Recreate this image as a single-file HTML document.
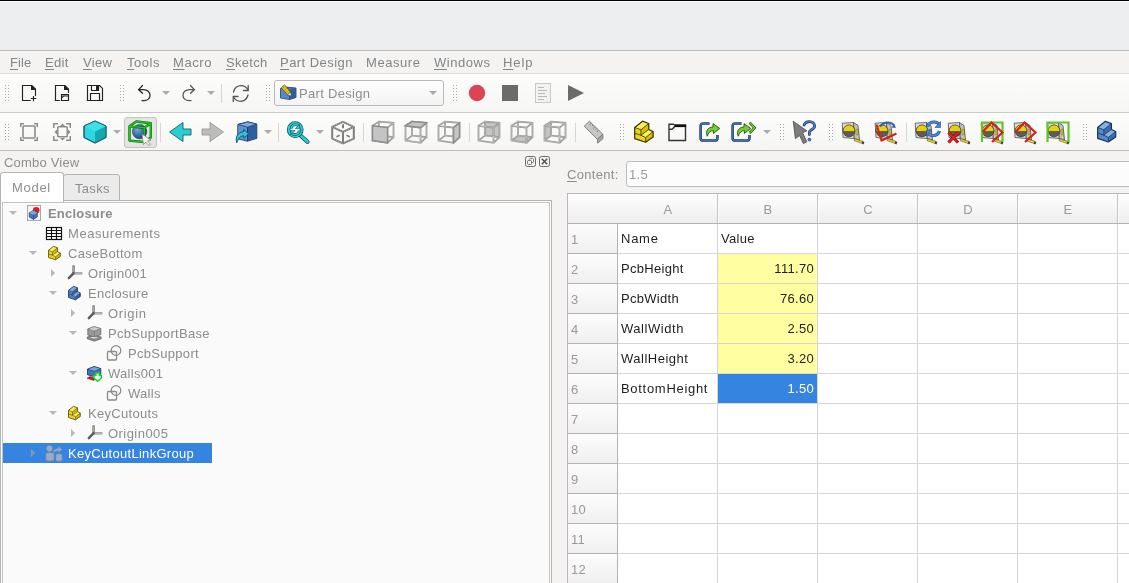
<!DOCTYPE html>
<html><head><meta charset="utf-8">
<style>
*{box-sizing:border-box;margin:0;padding:0}
html,body{width:1129px;height:583px;overflow:hidden;background:#f4f3f1;font-family:"Liberation Sans",sans-serif;font-size:13px;position:relative}
.a{position:absolute}
.t{position:absolute;white-space:pre;line-height:16px;margin-top:1px;will-change:transform}
.menu .t{margin-top:0}
.menu .t{color:#838586;top:55px;letter-spacing:0.3px}
u{text-decoration:underline;text-underline-offset:2px;text-decoration-thickness:1px}
.tree .t{color:#8c8c8c;letter-spacing:0.3px}
.grid .t{color:#1e1e1e;letter-spacing:0.3px}
.grid .hdr{color:#9a9a9a}
#ov{position:absolute;left:0;top:0}
</style></head><body>
<!-- title area -->
<div class="a" style="left:0;top:0;width:1129px;height:1px;background:#000"></div>
<div class="a" style="left:0;top:1px;width:1129px;height:1px;background:#fff"></div>
<div class="a" style="left:0;top:2px;width:1129px;height:48px;background:#edeef0"></div>
<div class="a" style="left:0;top:50px;width:1129px;height:1px;background:#bdbec0"></div>
<!-- menu -->
<div class="a" style="left:0;top:51px;width:1129px;height:22px;background:#f4f3f1"></div>
<div class="a" style="left:0;top:73px;width:1129px;height:1px;background:#dedddb"></div>
<!-- toolbar 1 -->
<div class="a" style="left:0;top:74px;width:1129px;height:38px;background:linear-gradient(#fdfdfc,#f5f5f3)"></div>
<div class="a" style="left:0;top:112px;width:1129px;height:1px;background:#c9c9c8"></div>
<!-- toolbar 2 -->
<div class="a" style="left:0;top:113px;width:1129px;height:37px;background:linear-gradient(#fdfdfc,#f5f5f3)"></div>
<div class="a" style="left:0;top:150px;width:1129px;height:1px;background:#bcbcbb"></div>

<div class="menu">
<span class="t" style="left:10px;letter-spacing:0.1px"><u>F</u>ile</span>
<span class="t" style="left:45px"><u>E</u>dit</span>
<span class="t" style="left:83px"><u>V</u>iew</span>
<span class="t" style="left:127px;letter-spacing:0.55px"><u>T</u>ools</span>
<span class="t" style="left:173px;letter-spacing:0.6px"><u>M</u>acro</span>
<span class="t" style="left:226px"><u>S</u>ketch</span>
<span class="t" style="left:280px;letter-spacing:0.45px"><u>P</u>art Design</span>
<span class="t" style="left:366px;letter-spacing:0.55px">Measure</span>
<span class="t" style="left:434px;letter-spacing:0.55px"><u>W</u>indows</span>
<span class="t" style="left:503px;letter-spacing:0.9px"><u>H</u>elp</span>
</div>

<!-- combo box -->
<div class="a" style="left:274px;top:80px;width:170px;height:26px;border:1px solid #bababa;border-radius:3px;background:linear-gradient(#fefefe,#f3f3f3)"></div>
<span class="t" style="left:299px;top:85px;color:#8e8e8e;letter-spacing:0.3px">Part Design</span>
<!-- checked button -->
<div class="a" style="left:124px;top:117px;width:33px;height:31px;border:1px solid #c3c3c3;border-radius:3px;background:#e4e4e4"></div>

<!-- combo view -->
<span class="t" style="left:4px;top:154px;color:#8e8e8e;letter-spacing:0.2px">Combo View</span>
<!-- tab pane -->
<div class="a" style="left:0;top:200px;width:552px;height:390px;border:1px solid #b4b4b4;background:#fff"></div>
<div class="a" style="left:2px;top:202px;width:548px;height:390px;border:1px solid #c2c2c2;background:#fafafa"></div>
<div class="a" style="left:3px;top:203px;width:546px;height:390px;border:1px solid #fff;border-right:0;border-bottom:0"></div>
<!-- tabs -->
<div class="a" style="left:63px;top:174px;width:57px;height:27px;border:1px solid #b4b4b4;border-radius:3px 3px 0 0;background:#ebebeb"></div>
<div class="a" style="left:0;top:172px;width:64px;height:30px;border:1px solid #b4b4b4;border-bottom:0;border-radius:3px 3px 0 0;background:#fff"></div>
<span class="t" style="left:12px;top:179px;color:#8e8e8e;letter-spacing:0.7px">Model</span>
<span class="t" style="left:75px;top:180px;color:#8e8e8e;letter-spacing:0.3px">Tasks</span>

<!-- tree -->
<div class="a" style="left:3px;top:443px;width:209px;height:20px;background:#3584e0"></div>
<div class="tree">
<span class="t" style="left:48px;top:205px;font-weight:bold;letter-spacing:0.2px">Enclosure</span>
<span class="t" style="left:68px;top:225px;letter-spacing:0.55px">Measurements</span>
<span class="t" style="left:68px;top:245px">CaseBottom</span>
<span class="t" style="left:88px;top:265px">Origin001</span>
<span class="t" style="left:88px;top:285px">Enclosure</span>
<span class="t" style="left:108px;top:305px;letter-spacing:0.65px">Origin</span>
<span class="t" style="left:108px;top:325px">PcbSupportBase</span>
<span class="t" style="left:128px;top:345px">PcbSupport</span>
<span class="t" style="left:108px;top:365px">Walls001</span>
<span class="t" style="left:128px;top:385px">Walls</span>
<span class="t" style="left:88px;top:405px">KeyCutouts</span>
<span class="t" style="left:108px;top:425px;letter-spacing:0.45px">Origin005</span>
<span class="t" style="left:68px;top:445px;color:#fff">KeyCutoutLinkGroup</span>
</div>

<!-- float/close buttons -->
<!-- sheet-html -->
<span class="t" style="left:567px;top:166px;color:#8e8e8e;letter-spacing:0.3px"><u>C</u>ontent:</span>
<div class="a" style="left:626px;top:161px;width:520px;height:26px;border:1px solid #bdbdbd;border-radius:3px;background:#fcfcfc"></div>
<span class="t" style="left:629px;top:166px;color:#9a9a9a;letter-spacing:0.3px">1.5</span>

<div class="a" style="left:567px;top:193px;width:600px;height:400px;border:1px solid #b9b9b9;background:#fff"></div>
<div class="a" style="left:568px;top:194px;width:600px;height:29px;background:linear-gradient(#fefefe,#ededed)"></div>
<div class="a" style="left:568px;top:224px;width:49px;height:370px;background:linear-gradient(90deg,#fbfbfb,#eeeeee)"></div>

<div class="grid">
<div class="a" style="left:717px;top:194px;width:1px;height:29px;background:#c6c6c6"></div>
<div class="a" style="left:718px;top:194px;width:1px;height:29px;background:#fdfdfd"></div>
<div class="a" style="left:817px;top:194px;width:1px;height:29px;background:#c6c6c6"></div>
<div class="a" style="left:818px;top:194px;width:1px;height:29px;background:#fdfdfd"></div>
<div class="a" style="left:917px;top:194px;width:1px;height:29px;background:#c6c6c6"></div>
<div class="a" style="left:918px;top:194px;width:1px;height:29px;background:#fdfdfd"></div>
<div class="a" style="left:1017px;top:194px;width:1px;height:29px;background:#c6c6c6"></div>
<div class="a" style="left:1018px;top:194px;width:1px;height:29px;background:#fdfdfd"></div>
<div class="a" style="left:1117px;top:194px;width:1px;height:29px;background:#c6c6c6"></div>
<div class="a" style="left:1118px;top:194px;width:1px;height:29px;background:#fdfdfd"></div>
<div class="a" style="left:568px;top:223px;width:561px;height:1px;background:#b3b3b3"></div>
<div class="a" style="left:568px;top:224px;width:49px;height:29px;background:linear-gradient(#fdfdfd,#efefef)"></div>
<div class="a" style="left:568px;top:253px;width:49px;height:1px;background:#b3b3b3"></div>
<div class="a" style="left:568px;top:254px;width:49px;height:29px;background:linear-gradient(#fdfdfd,#efefef)"></div>
<div class="a" style="left:568px;top:283px;width:49px;height:1px;background:#b3b3b3"></div>
<div class="a" style="left:568px;top:284px;width:49px;height:29px;background:linear-gradient(#fdfdfd,#efefef)"></div>
<div class="a" style="left:568px;top:313px;width:49px;height:1px;background:#b3b3b3"></div>
<div class="a" style="left:568px;top:314px;width:49px;height:29px;background:linear-gradient(#fdfdfd,#efefef)"></div>
<div class="a" style="left:568px;top:343px;width:49px;height:1px;background:#b3b3b3"></div>
<div class="a" style="left:568px;top:344px;width:49px;height:29px;background:linear-gradient(#fdfdfd,#efefef)"></div>
<div class="a" style="left:568px;top:373px;width:49px;height:1px;background:#b3b3b3"></div>
<div class="a" style="left:568px;top:374px;width:49px;height:29px;background:linear-gradient(#fdfdfd,#efefef)"></div>
<div class="a" style="left:568px;top:403px;width:49px;height:1px;background:#b3b3b3"></div>
<div class="a" style="left:568px;top:404px;width:49px;height:29px;background:linear-gradient(#fdfdfd,#efefef)"></div>
<div class="a" style="left:568px;top:433px;width:49px;height:1px;background:#b3b3b3"></div>
<div class="a" style="left:568px;top:434px;width:49px;height:29px;background:linear-gradient(#fdfdfd,#efefef)"></div>
<div class="a" style="left:568px;top:463px;width:49px;height:1px;background:#b3b3b3"></div>
<div class="a" style="left:568px;top:464px;width:49px;height:29px;background:linear-gradient(#fdfdfd,#efefef)"></div>
<div class="a" style="left:568px;top:493px;width:49px;height:1px;background:#b3b3b3"></div>
<div class="a" style="left:568px;top:494px;width:49px;height:29px;background:linear-gradient(#fdfdfd,#efefef)"></div>
<div class="a" style="left:568px;top:523px;width:49px;height:1px;background:#b3b3b3"></div>
<div class="a" style="left:568px;top:524px;width:49px;height:29px;background:linear-gradient(#fdfdfd,#efefef)"></div>
<div class="a" style="left:568px;top:553px;width:49px;height:1px;background:#b3b3b3"></div>
<div class="a" style="left:568px;top:554px;width:49px;height:29px;background:linear-gradient(#fdfdfd,#efefef)"></div>
<div class="a" style="left:568px;top:583px;width:49px;height:1px;background:#b3b3b3"></div>
<div class="a" style="left:617px;top:224px;width:1px;height:370px;background:#b3b3b3"></div>
<div class="a" style="left:618px;top:253px;width:511px;height:1px;background:#d6d6d8"></div>
<div class="a" style="left:618px;top:283px;width:511px;height:1px;background:#d6d6d8"></div>
<div class="a" style="left:618px;top:313px;width:511px;height:1px;background:#d6d6d8"></div>
<div class="a" style="left:618px;top:343px;width:511px;height:1px;background:#d6d6d8"></div>
<div class="a" style="left:618px;top:373px;width:511px;height:1px;background:#d6d6d8"></div>
<div class="a" style="left:618px;top:403px;width:511px;height:1px;background:#d6d6d8"></div>
<div class="a" style="left:618px;top:433px;width:511px;height:1px;background:#d6d6d8"></div>
<div class="a" style="left:618px;top:463px;width:511px;height:1px;background:#d6d6d8"></div>
<div class="a" style="left:618px;top:493px;width:511px;height:1px;background:#d6d6d8"></div>
<div class="a" style="left:618px;top:523px;width:511px;height:1px;background:#d6d6d8"></div>
<div class="a" style="left:618px;top:553px;width:511px;height:1px;background:#d6d6d8"></div>
<div class="a" style="left:618px;top:583px;width:511px;height:1px;background:#d6d6d8"></div>
<div class="a" style="left:717px;top:224px;width:1px;height:370px;background:#d6d6d8"></div>
<div class="a" style="left:817px;top:224px;width:1px;height:370px;background:#d6d6d8"></div>
<div class="a" style="left:917px;top:224px;width:1px;height:370px;background:#d6d6d8"></div>
<div class="a" style="left:1017px;top:224px;width:1px;height:370px;background:#d6d6d8"></div>
<div class="a" style="left:1117px;top:224px;width:1px;height:370px;background:#d6d6d8"></div>
<div class="a" style="left:718px;top:254px;width:99px;height:29px;background:#ffffa2"></div>
<div class="a" style="left:718px;top:284px;width:99px;height:29px;background:#ffffa2"></div>
<div class="a" style="left:718px;top:314px;width:99px;height:29px;background:#ffffa2"></div>
<div class="a" style="left:718px;top:344px;width:99px;height:29px;background:#ffffa2"></div>
<div class="a" style="left:718px;top:374px;width:99px;height:29px;background:#3584e0"></div>
<span class="t hdr" style="left:648px;width:40px;text-align:center;top:201px">A</span>
<span class="t hdr" style="left:748px;width:40px;text-align:center;top:201px">B</span>
<span class="t hdr" style="left:848px;width:40px;text-align:center;top:201px">C</span>
<span class="t hdr" style="left:948px;width:40px;text-align:center;top:201px">D</span>
<span class="t hdr" style="left:1048px;width:40px;text-align:center;top:201px">E</span>
<span class="t hdr" style="left:571px;top:231px">1</span>
<span class="t hdr" style="left:571px;top:261px">2</span>
<span class="t hdr" style="left:571px;top:291px">3</span>
<span class="t hdr" style="left:571px;top:321px">4</span>
<span class="t hdr" style="left:571px;top:351px">5</span>
<span class="t hdr" style="left:571px;top:381px">6</span>
<span class="t hdr" style="left:571px;top:411px">7</span>
<span class="t hdr" style="left:571px;top:441px">8</span>
<span class="t hdr" style="left:571px;top:471px">9</span>
<span class="t hdr" style="left:571px;top:501px">10</span>
<span class="t hdr" style="left:571px;top:531px">11</span>
<span class="t hdr" style="left:571px;top:561px">12</span>
<span class="t" style="left:621px;top:230px;letter-spacing:0.75px">Name</span>
<span class="t" style="left:721px;top:230px">Value</span>
<span class="t" style="left:621px;top:260px">PcbHeight</span>
<span class="t" style="left:714px;width:100px;text-align:right;top:260px;color:#1e1e1e">111.70</span>
<span class="t" style="left:621px;top:290px">PcbWidth</span>
<span class="t" style="left:714px;width:100px;text-align:right;top:290px;color:#1e1e1e">76.60</span>
<span class="t" style="left:621px;top:320px;letter-spacing:0.55px">WallWidth</span>
<span class="t" style="left:714px;width:100px;text-align:right;top:320px;color:#1e1e1e">2.50</span>
<span class="t" style="left:621px;top:350px;letter-spacing:0.5px">WallHeight</span>
<span class="t" style="left:714px;width:100px;text-align:right;top:350px;color:#1e1e1e">3.20</span>
<span class="t" style="left:621px;top:380px;letter-spacing:0.7px">BottomHeight</span>
<span class="t" style="left:714px;width:100px;text-align:right;top:380px;color:#fff">1.50</span>
</div>
<svg id="ov" width="1129" height="583" viewBox="0 0 1129 583">
<defs>
 <pattern id="gp" width="3" height="3" patternUnits="userSpaceOnUse"><rect width="1" height="1" fill="#b4b4b4"/></pattern>
</defs>
<!-- grips -->
<path fill="#a9a9a9" d="M5 85h1v1h-1zM5 88h1v1h-1zM5 91h1v1h-1zM5 94h1v1h-1zM5 97h1v1h-1zM5 100h1v1h-1zM8 85h1v1h-1zM8 88h1v1h-1zM8 91h1v1h-1zM8 94h1v1h-1zM8 97h1v1h-1zM8 100h1v1h-1zM120 85h1v1h-1zM120 88h1v1h-1zM120 91h1v1h-1zM120 94h1v1h-1zM120 97h1v1h-1zM120 100h1v1h-1zM123 85h1v1h-1zM123 88h1v1h-1zM123 91h1v1h-1zM123 94h1v1h-1zM123 97h1v1h-1zM123 100h1v1h-1zM266 85h1v1h-1zM266 88h1v1h-1zM266 91h1v1h-1zM266 94h1v1h-1zM266 97h1v1h-1zM266 100h1v1h-1zM269 85h1v1h-1zM269 88h1v1h-1zM269 91h1v1h-1zM269 94h1v1h-1zM269 97h1v1h-1zM269 100h1v1h-1zM453 85h1v1h-1zM453 88h1v1h-1zM453 91h1v1h-1zM453 94h1v1h-1zM453 97h1v1h-1zM453 100h1v1h-1zM456 85h1v1h-1zM456 88h1v1h-1zM456 91h1v1h-1zM456 94h1v1h-1zM456 97h1v1h-1zM456 100h1v1h-1zM5 124h1v1h-1zM5 127h1v1h-1zM5 130h1v1h-1zM5 133h1v1h-1zM5 136h1v1h-1zM5 139h1v1h-1zM8 124h1v1h-1zM8 127h1v1h-1zM8 130h1v1h-1zM8 133h1v1h-1zM8 136h1v1h-1zM8 139h1v1h-1zM620 124h1v1h-1zM620 127h1v1h-1zM620 130h1v1h-1zM620 133h1v1h-1zM620 136h1v1h-1zM620 139h1v1h-1zM623 124h1v1h-1zM623 127h1v1h-1zM623 130h1v1h-1zM623 133h1v1h-1zM623 136h1v1h-1zM623 139h1v1h-1zM780 124h1v1h-1zM780 127h1v1h-1zM780 130h1v1h-1zM780 133h1v1h-1zM780 136h1v1h-1zM780 139h1v1h-1zM783 124h1v1h-1zM783 127h1v1h-1zM783 130h1v1h-1zM783 133h1v1h-1zM783 136h1v1h-1zM783 139h1v1h-1zM829 124h1v1h-1zM829 127h1v1h-1zM829 130h1v1h-1zM829 133h1v1h-1zM829 136h1v1h-1zM829 139h1v1h-1zM832 124h1v1h-1zM832 127h1v1h-1zM832 130h1v1h-1zM832 133h1v1h-1zM832 136h1v1h-1zM832 139h1v1h-1zM1083 124h1v1h-1zM1083 127h1v1h-1zM1083 130h1v1h-1zM1083 133h1v1h-1zM1083 136h1v1h-1zM1083 139h1v1h-1zM1086 124h1v1h-1zM1086 127h1v1h-1zM1086 130h1v1h-1zM1086 133h1v1h-1zM1086 136h1v1h-1zM1086 139h1v1h-1z"/>
<!-- dropdown arrows -->
<g fill="#acacac">
<path d="M162 91h8l-4 4z"/><path d="M207 91h8l-4 4z"/><path d="M429 91h8l-4 4z"/>
<path d="M113 130h8l-4 4z"/><path d="M264 130h8l-4 4z"/><path d="M316 130h8l-4 4z"/><path d="M763 130h8l-4 4z"/>
</g>
<!-- separators -->
<g fill="#d6d6d4">
<rect x="221" y="84" width="1" height="19"/>
<rect x="160" y="123" width="1" height="19"/>
<rect x="278" y="123" width="1" height="19"/>
<rect x="363" y="123" width="1" height="19"/>
<rect x="469" y="123" width="1" height="19"/>
<rect x="575" y="123" width="1" height="19"/>
<rect x="906" y="123" width="1" height="19"/>
</g>
<!-- New -->
<g fill="none" stroke="#222" stroke-width="1.15">
<path d="M31 85.5H22.5V100.5H30.8"/><path d="M35.5 89.5V96"/>
<path d="M33.5 96V101.2M30.8 98.5H36.2"/>
</g>
<path d="M31 85H32.2L36 88.8V90H31Z" fill="#222"/>
<!-- Open -->
<g fill="none" stroke="#222" stroke-width="1.15">
<path d="M64 85.5H55.5V100.5H59.8"/><path d="M68.5 89.5V93"/>
<path d="M61.5 94.5H68.5V100.5H61.5Z"/>
<path d="M62 97.5L63.5 96H68.5"/>
</g>
<path d="M64 85H65.2L69 88.8V90H64Z" fill="#222"/>
<path d="M61 94H65L66.2 95.2H61Z" fill="#222"/>
<!-- Save -->
<g fill="none" stroke="#222" stroke-width="1.15">
<path d="M87.5 85.5H99.6L102.5 88.4V100.5H87.5Z"/>
<path d="M91.5 85.5V90.5H98.5V85.5"/>
<path d="M90.5 100.5V93.5H99.5V100.5"/>
</g>
<rect x="96" y="85.5" width="2.6" height="4.6" fill="#222"/>
<!-- Undo -->
<g fill="none" stroke="#2a2a2a" stroke-width="1.3" stroke-linecap="round">
<path d="M142.5 85.5L138.6 89.6L142.5 93.2"/>
<path d="M139 89.6H143.5C147.5 89.6 150 92.2 150 95.2C150 98.2 147.5 100.6 143.8 100.6H142"/>
</g>
<!-- Redo -->
<g fill="none" stroke="#555" stroke-width="1.3" stroke-linecap="round">
<path d="M190.5 85.5L194.4 89.6L190.5 93.2"/>
<path d="M194 89.6H189.5C185.5 89.6 183 92.2 183 95.2C183 98.2 185.5 100.6 189.2 100.6H191"/>
</g>
<!-- Refresh -->
<g fill="none" stroke="#555" stroke-width="1.3" stroke-linecap="round">
<path d="M233.5 92C234.5 88 237.5 85.7 241 85.7C244 85.7 246.5 87.3 248 90"/>
<path d="M248.2 85.5V90.5H243.5"/>
<path d="M248 95C247 99 244 101.3 240.5 101.3C237.5 101.3 235 99.7 233.5 97"/>
<path d="M233.3 101.5V96.5H238"/>
</g>
<!-- combo icon: blue cube w/ pencil -->
<path d="M280.5 88.5L285 87L296 88V97.5L289.5 99.5L280.5 98Z" fill="#3f73b7" stroke="#1e3a6a" stroke-width="0.8"/>
<path d="M280.9 88.8L289.5 90.2V99.1L280.9 97.7Z" fill="#5489d0"/>
<path d="M289.5 90.2L295.6 88.3V97.3L289.5 99.1Z" fill="#2f5f9f"/>
<path d="M289.5 90.2V99.3" stroke="#1e3a6a" stroke-width="0.6"/>
<path d="M281.2 87.6L284.6 84.8L290.6 92.2L287.6 94.8Z" fill="#e3c315" stroke="#4a3c00" stroke-width="0.6"/>
<path d="M287.6 94.8L290.6 92.2L291.3 96Z" fill="#fff" stroke="#4a3c00" stroke-width="0.5"/>
<g fill="#7a6400"><circle cx="283.5" cy="87.2" r="0.45"/><circle cx="285.3" cy="89.3" r="0.45"/><circle cx="287.1" cy="91.4" r="0.45"/><circle cx="285" cy="86.6" r="0.45"/><circle cx="286.8" cy="88.7" r="0.45"/><circle cx="288.6" cy="90.8" r="0.45"/></g>
<!-- record/stop/macro/play -->
<circle cx="477" cy="93" r="8.2" fill="#da4453"/>
<rect x="502" y="85" width="16" height="16" fill="#6b6b6b"/>
<rect x="535.5" y="83.5" width="15" height="19" fill="#f2f2f2" stroke="#c8c8c8"/>
<g stroke="#b8b8b8" stroke-width="1"><path d="M538 87.5h6M538 90.5h9M538 93.5h7M538 96.5h9M538 99.5h6"/></g>
<path d="M568 85L584 93L568 101Z" fill="#6b6b6b"/>
<!-- Fit all -->
<g fill="none" stroke="#8d8d8d" stroke-width="1.6">
<rect x="23" y="126" width="12" height="12" rx="1"/>
</g>
<g fill="none" stroke="#8d8d8d" stroke-width="1.5">
<path d="M20.75 127V123.75H24"/><path d="M34 123.75H37.25V127"/><path d="M20.75 137V140.25H24"/><path d="M34 140.25H37.25V137"/>
</g>
<!-- Fit selection -->
<g fill="none" stroke="#8d8d8d" stroke-width="1.5">
<path d="M53.75 128V123.75H58"/><path d="M66 123.75H70.25V128"/><path d="M53.75 136V140.25H58"/><path d="M66 140.25H70.25V136"/>
<rect x="57.75" y="126.75" width="9.5" height="10" rx="0.8"/>
</g>
<g fill="#8d8d8d"><path d="M60 126L62.5 123.5L65 126Z"/><path d="M60 138L62.5 140.5L65 138Z"/><path d="M57 129.5L54.5 132L57 134.5Z"/><path d="M68 129.5L70.5 132L68 134.5Z"/></g>
<!-- cyan cube -->
<path d="M95 121L106 126V137.5L95 143L84 137.5V126Z" fill="#2ed6de" stroke="#0d5a5e" stroke-width="0.9"/>
<path d="M95 131.5L106 126V137.5L95 143Z" fill="#17a8ad"/>
<path d="M84 126L95 131.5L106 126L95 121Z" fill="#3ee0e8"/>
<path d="M95 121L106 126V137.5L95 143L84 137.5V126Z" fill="none" stroke="#0d5a5e" stroke-width="0.9"/>
<!-- box selection icon -->
<defs><radialGradient id="sph" cx="0.35" cy="0.35" r="0.7"><stop offset="0" stop-color="#7ea6dc"/><stop offset="0.6" stop-color="#3b69ad"/><stop offset="1" stop-color="#203f78"/></radialGradient></defs>
<circle cx="139.6" cy="131.6" r="7.2" fill="url(#sph)" stroke="#1c2f55" stroke-width="0.6"/>
<g fill="none" stroke="#0b6a0b" stroke-width="2.4" stroke-linejoin="round">
<path d="M129.5 126.3L136.3 121.5L150.8 123.2L144.2 127.7Z M129.5 126.3V140.6L144.2 142V127.7 M150.8 123.2V137.6L144.2 142"/>
</g>
<g fill="none" stroke="#18d018" stroke-width="1.3" stroke-linejoin="round">
<path d="M129.5 126.3L136.3 121.5L150.8 123.2L144.2 127.7Z M129.5 126.3V140.6L144.2 142V127.7 M150.8 123.2V137.6L144.2 142"/>
</g>
<path d="M142 134L151 140.2L147.6 140.8L150.6 144.4L148.8 145.6L145.8 142L143.4 144.6Z" fill="#f6f6f6" stroke="#7a7a7a" stroke-width="0.7"/>
<!-- back arrow -->
<path d="M169.5 132L183 122.5V129H191V135H183V141.5Z" fill="#2ccdd3" stroke="#0d6569" stroke-width="0.9"/>
<!-- forward arrow -->
<path d="M223.5 132L210 122.5V129H202V135H210V141.5Z" fill="#bcbcbc" stroke="#9a9a9a" stroke-width="0.9"/>
<!-- blue cube with arrow -->
<path d="M237.8 124.5L247.8 121.8L256.8 124.2V138.3L247.5 141.2L237.8 138.8Z" fill="#3c70b6" stroke="#17325c" stroke-width="0.9"/>
<path d="M238.2 124.8L247.5 127.2V140.8L238.2 138.5Z" fill="#5f93d8"/>
<path d="M247.5 127.2L256.4 124.5V138L247.5 140.8Z" fill="#2f5e9e"/>
<path d="M238 124.5L247.8 121.8L256.8 124.2L247.5 127.2Z" fill="#7eaae2" stroke="#17325c" stroke-width="0.7"/>
<path d="M247.5 127.2V141" stroke="#17325c" stroke-width="0.8"/>
<path d="M236.8 142.8C234.8 136.5 238.2 132.2 243.6 131.8V129.4L248.6 133.8L243.8 138.4V135.8C240.6 135.8 238.2 138.2 236.8 142.8Z" fill="#2bcad2" stroke="#0b4f53" stroke-width="0.9" stroke-linejoin="round"/>
<!-- zoom magnifier -->
<line x1="300.2" y1="135.2" x2="307.6" y2="142" stroke="#0a5256" stroke-width="4" stroke-linecap="round"/>
<line x1="300.2" y1="135.2" x2="307.6" y2="142" stroke="#2cd0d6" stroke-width="2.4" stroke-linecap="round"/>
<circle cx="295.2" cy="129.6" r="6.6" fill="#eef4f4" stroke="#0a5256" stroke-width="3.6"/>
<circle cx="295.2" cy="129.6" r="6.6" fill="none" stroke="#2cd0d6" stroke-width="2"/>
<path d="M291.2 128.8C291.2 126.2 293.2 124.8 295.6 124.8C297 124.8 298.2 125.4 298.8 126.4" fill="none" stroke="#0a5256" stroke-width="2.6"/>
<path d="M291.2 128.8C291.2 126.2 293.2 124.8 295.6 124.8C297 124.8 298.2 125.4 298.8 126.4" fill="none" stroke="#2cd0d6" stroke-width="1.4"/>
<path d="M299.6 124.4V128.6H295.4Z" fill="#2cd0d6" stroke="#0a5256" stroke-width="0.6"/>
<path d="M299.2 130.4C299.2 133 297.2 134.4 294.8 134.4C293.4 134.4 292.2 133.8 291.6 132.8" fill="none" stroke="#0a5256" stroke-width="2.6"/>
<path d="M299.2 130.4C299.2 133 297.2 134.4 294.8 134.4C293.4 134.4 292.2 133.8 291.6 132.8" fill="none" stroke="#2cd0d6" stroke-width="1.4"/>
<path d="M290.8 134.8V130.6H295Z" fill="#2cd0d6" stroke="#0a5256" stroke-width="0.6"/>
<!-- iso wire cube -->
<g fill="none" stroke="#7e7e7e" stroke-width="2">
<path d="M343 121.8L353.8 126.8V138.6L343 143.4L332.2 138.6V126.8Z"/>
<path d="M332.2 126.8L343 132L353.8 126.8M343 132V143.2M343 124.2V128.2"/>
</g>
<g fill="none" stroke="#d8d8d8" stroke-width="0.5" stroke-dasharray="1 1.2">
<path d="M343 121.8L353.8 126.8M332.2 126.8L343 132L353.8 126.8M343 121.8L332.2 126.8M332.2 138.6L343 143.4L353.8 138.6"/>
</g>
<g stroke="#7e7e7e" stroke-width="1.6" stroke-linecap="round"><path d="M337 136.6L339.2 135.6M347 135.6L349.2 136.6"/></g>
<g transform="translate(371 121)">
<path d="M1.5 4.8L16.5 6.6L16.5 21.8L1.5 19.6ZM8 0.6L22.5 1.8L22.5 16.2L8 14.6ZM1.5 4.8L8 0.6M16.5 6.6L22.5 1.8M16.5 21.8L22.5 16.2M1.5 19.6L8 14.6" fill="none" stroke="#8e8e8e" stroke-width="1.7"/>
<path d="M1.5 4.8L16.5 6.6L16.5 21.8L1.5 19.6ZM8 0.6L22.5 1.8L22.5 16.2L8 14.6ZM1.5 4.8L8 0.6M16.5 6.6L22.5 1.8M16.5 21.8L22.5 16.2M1.5 19.6L8 14.6" fill="none" stroke="#e2e2e2" stroke-width="0.4"/>
<path d="M1.5 4.8L16.5 6.6L16.5 21.8L1.5 19.6Z" fill="#c4c4c4" stroke="#8e8e8e" stroke-width="1.5"/>
</g>
<g transform="translate(404 121)">
<path d="M1.5 4.8L16.5 6.6L16.5 21.8L1.5 19.6ZM8 0.6L22.5 1.8L22.5 16.2L8 14.6ZM1.5 4.8L8 0.6M16.5 6.6L22.5 1.8M16.5 21.8L22.5 16.2M1.5 19.6L8 14.6" fill="none" stroke="#8e8e8e" stroke-width="1.7"/>
<path d="M1.5 4.8L16.5 6.6L16.5 21.8L1.5 19.6ZM8 0.6L22.5 1.8L22.5 16.2L8 14.6ZM1.5 4.8L8 0.6M16.5 6.6L22.5 1.8M16.5 21.8L22.5 16.2M1.5 19.6L8 14.6" fill="none" stroke="#e2e2e2" stroke-width="0.4"/>
<path d="M1.5 4.8L16.5 6.6L22.5 1.8L8 0.6Z" fill="#c4c4c4" stroke="#8e8e8e" stroke-width="1.5"/>
</g>
<g transform="translate(437 121)">
<path d="M1.5 4.8L16.5 6.6L16.5 21.8L1.5 19.6ZM8 0.6L22.5 1.8L22.5 16.2L8 14.6ZM1.5 4.8L8 0.6M16.5 6.6L22.5 1.8M16.5 21.8L22.5 16.2M1.5 19.6L8 14.6" fill="none" stroke="#8e8e8e" stroke-width="1.7"/>
<path d="M1.5 4.8L16.5 6.6L16.5 21.8L1.5 19.6ZM8 0.6L22.5 1.8L22.5 16.2L8 14.6ZM1.5 4.8L8 0.6M16.5 6.6L22.5 1.8M16.5 21.8L22.5 16.2M1.5 19.6L8 14.6" fill="none" stroke="#e2e2e2" stroke-width="0.4"/>
<path d="M16.5 6.6L22.5 1.8L22.5 16.2L16.5 21.8Z" fill="#c4c4c4" stroke="#8e8e8e" stroke-width="1.5"/>
</g>
<g transform="translate(477 121)">
<path d="M8 0.6L22.5 1.8L22.5 16.2L8 14.6Z" fill="#c4c4c4"/>
<path d="M1.5 4.8L16.5 6.6L16.5 21.8L1.5 19.6ZM8 0.6L22.5 1.8L22.5 16.2L8 14.6ZM1.5 4.8L8 0.6M16.5 6.6L22.5 1.8M16.5 21.8L22.5 16.2M1.5 19.6L8 14.6" fill="none" stroke="#8e8e8e" stroke-width="1.7"/>
<path d="M1.5 4.8L16.5 6.6L16.5 21.8L1.5 19.6ZM8 0.6L22.5 1.8L22.5 16.2L8 14.6ZM1.5 4.8L8 0.6M16.5 6.6L22.5 1.8M16.5 21.8L22.5 16.2M1.5 19.6L8 14.6" fill="none" stroke="#e2e2e2" stroke-width="0.4"/>
</g>
<g transform="translate(510 121)">
<path d="M1.5 19.6L16.5 21.8L22.5 16.2L8 14.6Z" fill="#c4c4c4"/>
<path d="M1.5 4.8L16.5 6.6L16.5 21.8L1.5 19.6ZM8 0.6L22.5 1.8L22.5 16.2L8 14.6ZM1.5 4.8L8 0.6M16.5 6.6L22.5 1.8M16.5 21.8L22.5 16.2M1.5 19.6L8 14.6" fill="none" stroke="#8e8e8e" stroke-width="1.7"/>
<path d="M1.5 4.8L16.5 6.6L16.5 21.8L1.5 19.6ZM8 0.6L22.5 1.8L22.5 16.2L8 14.6ZM1.5 4.8L8 0.6M16.5 6.6L22.5 1.8M16.5 21.8L22.5 16.2M1.5 19.6L8 14.6" fill="none" stroke="#e2e2e2" stroke-width="0.4"/>
</g>
<g transform="translate(543 121)">
<path d="M1.5 4.8L8 0.6L8 14.6L1.5 19.6Z" fill="#c4c4c4"/>
<path d="M1.5 4.8L16.5 6.6L16.5 21.8L1.5 19.6ZM8 0.6L22.5 1.8L22.5 16.2L8 14.6ZM1.5 4.8L8 0.6M16.5 6.6L22.5 1.8M16.5 21.8L22.5 16.2M1.5 19.6L8 14.6" fill="none" stroke="#8e8e8e" stroke-width="1.7"/>
<path d="M1.5 4.8L16.5 6.6L16.5 21.8L1.5 19.6ZM8 0.6L22.5 1.8L22.5 16.2L8 14.6ZM1.5 4.8L8 0.6M16.5 6.6L22.5 1.8M16.5 21.8L22.5 16.2M1.5 19.6L8 14.6" fill="none" stroke="#e2e2e2" stroke-width="0.4"/>
</g><!-- ruler -->
<path d="M584.2 126.2L589.5 121.2L602.8 134.2L597.4 139.4Z" fill="#c6c6c6" stroke="#6e6e6e" stroke-width="0.8" stroke-linejoin="round"/>
<path d="M597.4 139.4L602.8 134.2L603 138.6L597.6 143.2Z" fill="#a6a6a6" stroke="#6e6e6e" stroke-width="0.8" stroke-linejoin="round"/>
<g stroke="#6a6a6a" stroke-width="0.9"><path d="M591.2 123.2L589.6 124.8M593 125L592 126M594.8 126.8L593.2 128.4M596.6 128.6L595.6 129.6M598.4 130.4L596.8 132"/></g>
<!-- yellow part -->
<use href="#part" transform="translate(631.6 117.6) scale(1.56)" style="--l:#f8ee5e;--m:#e9d41e;--d:#d6be00;--s:#3e3600"/>
<!-- group folder -->
<path d="M669 140.5V124.2H673.5L676 126.2H685.5V140.5Z" fill="none" stroke="#333" stroke-width="1.4"/>
<path d="M669 129.3H672.2L675 126.2H685.5" fill="none" stroke="#333" stroke-width="1.4"/>
<rect x="675" y="124.3" width="11.2" height="2.8" fill="#111"/>
<!-- link -->
<path d="M709.5 123.5H703.2Q700.6 123.5 700.6 126.1V137.9Q700.6 140.5 703.2 140.5H714.9Q717.5 140.5 717.5 137.9V135" fill="none" stroke="#17335f" stroke-width="2.6"/>
<path d="M709.5 123.5H703.2Q700.6 123.5 700.6 126.1V137.9Q700.6 140.5 703.2 140.5H714.9Q717.5 140.5 717.5 137.9V135" fill="none" stroke="#3f70b4" stroke-width="1.4"/>
<path d="M707.2 136.2C705.2 131 707.8 127.2 713 127V123.6L719.8 128.4L713.4 133.4V130.6C710.6 130.6 708.4 132.6 707.2 136.2Z" fill="#6fd12a" stroke="#1c3d08" stroke-width="0.8" stroke-linejoin="round"/>
<!-- link sub -->
<path d="M741.5 123.5H735.2Q732.6 123.5 732.6 126.1V137.9Q732.6 140.5 735.2 140.5H746.9Q749.5 140.5 749.5 137.9V135" fill="none" stroke="#17335f" stroke-width="2.6"/>
<path d="M741.5 123.5H735.2Q732.6 123.5 732.6 126.1V137.9Q732.6 140.5 735.2 140.5H746.9Q749.5 140.5 749.5 137.9V135" fill="none" stroke="#3f70b4" stroke-width="1.4"/>
<path d="M738.2 136.2C736.2 131 738.8 127.2 744 127V123.6L750.8 128.4L744.4 133.4V130.6C741.6 130.6 739.4 132.6 738.2 136.2Z" fill="#6fd12a" stroke="#1c3d08" stroke-width="0.8" stroke-linejoin="round"/>
<path d="M749.6 122.6L754.6 127.8L749.6 133" fill="none" stroke="#1c3d08" stroke-width="2.6"/>
<path d="M749.6 122.6L754.6 127.8L749.6 133" fill="none" stroke="#6fd12a" stroke-width="1.4"/>
<!-- whats this -->
<path d="M793.2 121.2L806.8 130.8L802.6 132.8L806.8 141.8L803.4 143.6L799.6 135.6L795.4 138.6Z" fill="#7d7d7d" stroke="#4a4a4a" stroke-width="0.8" stroke-linejoin="round"/>
<path d="M804 125C805 122.5 807 121.6 809.4 121.6C812.4 121.6 814.6 123.4 814.6 126C814.6 128.6 812.6 129.4 810.8 130.2C809.8 130.7 809.4 131.4 809.4 132.6V134.6" fill="none" stroke="#173566" stroke-width="2.8" stroke-linecap="round"/>
<path d="M804 125C805 122.5 807 121.6 809.4 121.6C812.4 121.6 814.6 123.4 814.6 126C814.6 128.6 812.6 129.4 810.8 130.2C809.8 130.7 809.4 131.4 809.4 132.6V134.6" fill="none" stroke="#4a80cc" stroke-width="1.5" stroke-linecap="round"/>
<circle cx="809.4" cy="139.6" r="1.5" fill="#4a80cc" stroke="#173566" stroke-width="0.6"/>
<defs>
<g id="tape">
 <path d="M12.5 1.5L17 4.5L18.5 19L13 17.5Z" fill="#c2c2bc" stroke="#4e4e4c" stroke-width="0.8" stroke-linejoin="round"/>
 <path d="M1.2 2.2L12.5 1.5L13 17.5L2 16.5Z" fill="#dcdcd8" stroke="#4e4e4c" stroke-width="0.8" stroke-linejoin="round"/>
 <circle cx="8" cy="10" r="5.9" fill="#5c5c5a" stroke="#2a2a2a" stroke-width="0.5"/>
 <path d="M2.15 10.6A5.9 5.9 0 1 1 13.85 10.6Z" fill="#e8cf12" stroke="#2a2a2a" stroke-width="0.5"/>
 <rect x="15" y="8" width="2" height="6" rx="1" fill="#e8cf12" stroke="#444" stroke-width="0.4"/>
 <path d="M13.5 17.6L22.2 20.4L21.4 22.6L13 19.6Z" fill="#e8cf12" stroke="#3a3a3a" stroke-width="0.5"/>
 <path d="M21.4 20.2L23.4 21.2L22.4 23.6L20.8 22.6Z" fill="#3a3a3a"/>
</g>
</defs>
<use href="#tape" x="841" y="121"/>
<use href="#tape" x="874" y="121"/>
<path d="M876.5 124.5L881.5 140.5L896.5 133.5" fill="none" stroke="#d91e1e" stroke-width="2"/>
<path d="M880 126.5C884 121.5 891 121 894.5 126" fill="none" stroke="#2f62a8" stroke-width="2.2"/>
<path d="M896 128L894 124.5L891.5 127.5Z" fill="#2f62a8"/>
<use href="#tape" x="914" y="121"/>
<path d="M927.5 126.5C928.5 123.5 931 122 934 122C936.5 122 938.5 123.2 939.5 125" fill="none" stroke="#1f4f8f" stroke-width="3.2"/>
<path d="M927.5 126.5C928.5 123.5 931 122 934 122C936.5 122 938.5 123.2 939.5 125" fill="none" stroke="#4a86d0" stroke-width="2"/>
<path d="M940.5 121.5V127.5H935Z" fill="#4a86d0" stroke="#1f4f8f" stroke-width="0.6"/>
<path d="M939.5 131C938.5 134 936 135.5 933 135.5C930.5 135.5 928.5 134.3 927.5 132.5" fill="none" stroke="#1f4f8f" stroke-width="3.2"/>
<path d="M939.5 131C938.5 134 936 135.5 933 135.5C930.5 135.5 928.5 134.3 927.5 132.5" fill="none" stroke="#4a86d0" stroke-width="2"/>
<path d="M926.5 136V130H932Z" fill="#4a86d0" stroke="#1f4f8f" stroke-width="0.6"/>
<use href="#tape" x="947" y="121"/>
<path d="M948.5 132.5L958 142.5M958 132.5L948.5 142.5" stroke="#7a0a0a" stroke-width="3.2"/><path d="M948.5 132.5L958 142.5M958 132.5L948.5 142.5" stroke="#e01e1e" stroke-width="2"/>
<use href="#tape" x="980" y="121"/>
<path d="M982 142V122.5H1002.5V142" fill="none" stroke="#5cc82a" stroke-width="2.2"/>
<path d="M982.5 132L991.5 122.5L1002.5 132.5L992 142" fill="none" stroke="#d91e1e" stroke-width="2.2"/>
<use href="#tape" x="1013" y="121"/>
<path d="M1015.5 132L1024.5 122.5L1035.5 132.5L1025 142" fill="none" stroke="#d91e1e" stroke-width="2.2"/>
<use href="#tape" x="1046" y="121"/>
<path d="M1047.5 142V122.5H1068.5V142" fill="none" stroke="#5cc82a" stroke-width="2.2"/>
<!-- blue part right -->
<use href="#part" transform="translate(1094.6 117.8) scale(1.53)" style="--l:#86b0e6;--m:#5588cc;--d:#3c6cae;--s:#1a365f"/>
<!-- dock buttons -->
<rect x="525.5" y="156.5" width="10" height="10" rx="1.8" fill="none" stroke="#6a6a6a" stroke-width="1"/>
<rect x="529.5" y="158.5" width="4" height="4" rx="1" fill="none" stroke="#6a6a6a" stroke-width="0.9"/>
<rect x="527.5" y="160.5" width="4" height="4" rx="1" fill="#f4f3f1" stroke="#6a6a6a" stroke-width="0.9"/>
<rect x="539.5" y="156.5" width="10" height="10" rx="1.8" fill="none" stroke="#6a6a6a" stroke-width="1"/>
<path d="M541.8 158.8L547.2 164.2M547.2 158.8L541.8 164.2" stroke="#555" stroke-width="1.6"/>
<!-- tree triangles -->
<g fill="#b7b7b7">
<path d="M9 211h8l-4 4z"/>
<path d="M29 251h8l-4 4z"/>
<path d="M51 269v8l4-4z"/>
<path d="M49 291h8l-4 4z"/>
<path d="M71 309v8l4-4z"/>
<path d="M69 331h8l-4 4z"/>
<path d="M69 371h8l-4 4z"/>
<path d="M49 411h8l-4 4z"/>
<path d="M71 429v8l4-4z"/>
<path d="M31 449v8l4-4z" fill="#8a9bb0"/>
</g>
<!-- document icon -->
<rect x="27.5" y="205.5" width="13" height="15" fill="#f3f3f3" stroke="#a8a8a8" stroke-width="1"/>
<circle cx="36.2" cy="210.2" r="3.3" fill="#e81818"/>
<path d="M29.3 212.8L33.2 210.4L37.3 212.4V216.8L33.5 219.4L29.3 217Z" fill="#4279c4" stroke="#1d3a66" stroke-width="0.7"/>
<path d="M29.3 212.8L33.2 210.4L37.3 212.4L33.5 214.8Z" fill="#7aa6de"/>
<path d="M33.5 214.8V219.4" stroke="#1d3a66" stroke-width="0.6"/>
<!-- ss-icon -->
<rect x="46.5" y="227.5" width="15" height="12" fill="#fff" stroke="#111" stroke-width="1.2"/>
<g stroke="#111" stroke-width="1.2"><path d="M46 230.5H62M46 233.5H62M46 236.5H62M51.5 227V240M56.5 227V240"/></g>
<!-- parts yellow -->
<defs>
<g id="part">
<path d="M2 6.3L7 2.3L11 3.8L6 7.8Z" style="fill:var(--l)"/>
<path d="M2 6.3L6 7.8V11.3L9 12.8V15.8L2 13.5Z" style="fill:var(--m)"/>
<path d="M6 7.8L11 3.8V7.6L6 11.3Z" style="fill:var(--d)"/>
<path d="M6 11.3L11 7.6L13.8 9L9 12.8Z" style="fill:var(--l)"/>
<path d="M9 12.8L13.8 9V12.5L9 15.8Z" style="fill:var(--d)"/>
<path d="M2 6.3L7 2.3L11 3.8V7.6L13.8 9V12.5L9 15.8L2 13.5Z" fill="none" style="stroke:var(--s)" stroke-width="0.8" stroke-linejoin="round"/>
<path d="M2 6.3L6 7.8L11 3.8M6 7.8V11.3L11 7.6M6 11.3L9 12.8L13.8 9M9 12.8V15.8M2 10L6 11.3" fill="none" style="stroke:var(--s)" stroke-width="0.55"/>
</g>
<g id="origin">
<path d="M6.6 1.2V8.2" stroke="#7c7c7c" stroke-width="2.6" stroke-linecap="round"/>
<path d="M6.6 1.2V8.2" stroke="#a9a9a9" stroke-width="1.4" stroke-linecap="round"/>
<path d="M6.6 8.2H14.2" stroke="#8e8e8e" stroke-width="2.4" stroke-linecap="round"/>
<path d="M6.6 8.2H14.2" stroke="#c4c4c4" stroke-width="1.2" stroke-linecap="round"/>
<path d="M6.6 8.2L1.8 13.2" stroke="#5e5e5e" stroke-width="2.5" stroke-linecap="round"/>
</g>
<g id="sk">
<rect x="1.5" y="6.5" width="9" height="8.5" rx="1" fill="none" stroke="#8c8c8c" stroke-width="1.3"/>
<circle cx="10" cy="5.5" r="4.8" fill="none" stroke="#8c8c8c" stroke-width="1.3"/>
</g>
</defs>
<use href="#part" x="46.5" y="244" style="--l:#f7ec5c;--m:#e9d41e;--d:#cdb400;--s:#4d4400"/>
<use href="#part" x="66.5" y="404" style="--l:#f7ec5c;--m:#e9d41e;--d:#cdb400;--s:#4d4400"/>
<use href="#origin" x="67" y="265"/>
<use href="#origin" x="87" y="305"/>
<use href="#origin" x="87" y="425"/>
<use href="#sk" x="106" y="345"/>
<use href="#sk" x="106" y="385"/>
<!-- body blue -->
<use href="#part" x="66.5" y="284" style="--l:#7ea8de;--m:#4a7ec4;--d:#2f5f9f;--s:#17335e"/>
<!-- pad grey -->
<path d="M87.2 337L94 334.6L101.2 337V338.8L94.4 341.2L87.2 338.8Z" fill="#8a8a8a" stroke="#5a5a5a" stroke-width="0.6"/>
<path d="M90.5 337.2L94.2 336L98 337.2L94.2 338.6Z" fill="#fafafa"/>
<path d="M87.8 329L94 326.6L100.8 328.6V334.6L94.4 337L87.8 335Z" fill="#9a9a9a" stroke="#5a5a5a" stroke-width="0.7" stroke-linejoin="round"/>
<path d="M87.8 329L94 326.6L100.8 328.6L94.4 331Z" fill="#cdcdcd" stroke="#6a6a6a" stroke-width="0.5"/>
<path d="M94.4 331V337" stroke="#6a6a6a" stroke-width="0.6"/>
<!-- walls -->
<path d="M87.5 369.2L94 366.6L100.8 368.6V374.2L94.4 376.8L87.5 374.8Z" fill="#3f74bb" stroke="#14305c" stroke-width="0.8" stroke-linejoin="round"/>
<path d="M87.5 369.2L94 366.6L100.8 368.6L94.4 371.2Z" fill="#79a4dc" stroke="#14305c" stroke-width="0.5"/>
<path d="M87 378.2L90 376.6L95 378.4L94 380.6Z" fill="#c81818" stroke="#6a0a0a" stroke-width="0.5"/>
<path d="M95.9 372.9H99.3V375.5H101.4V378L97.6 381.2L93.8 378V375.5H95.9Z" fill="#fff" stroke="#12d612" stroke-width="1.5" stroke-linejoin="round"/>
<!-- link group on selection -->
<g fill="#9aabc2" stroke="#7f90a8" stroke-width="0.6">
<circle cx="49.5" cy="448.5" r="3"/>
<path d="M46 453.5L50 452.5L54 453.5V460L50 461L46 460Z"/>
<path d="M56 455C56 453.5 62 453.5 62 455V460C62 461.5 56 461.5 56 460Z"/>
<path d="M53 453C53 450 55.5 448.5 58.5 448.5V446.5L61.8 449.5L58.5 452.5V450.5C56.5 450.5 54.5 451.5 53 453Z"/>
</g>

</svg>

</body></html>
